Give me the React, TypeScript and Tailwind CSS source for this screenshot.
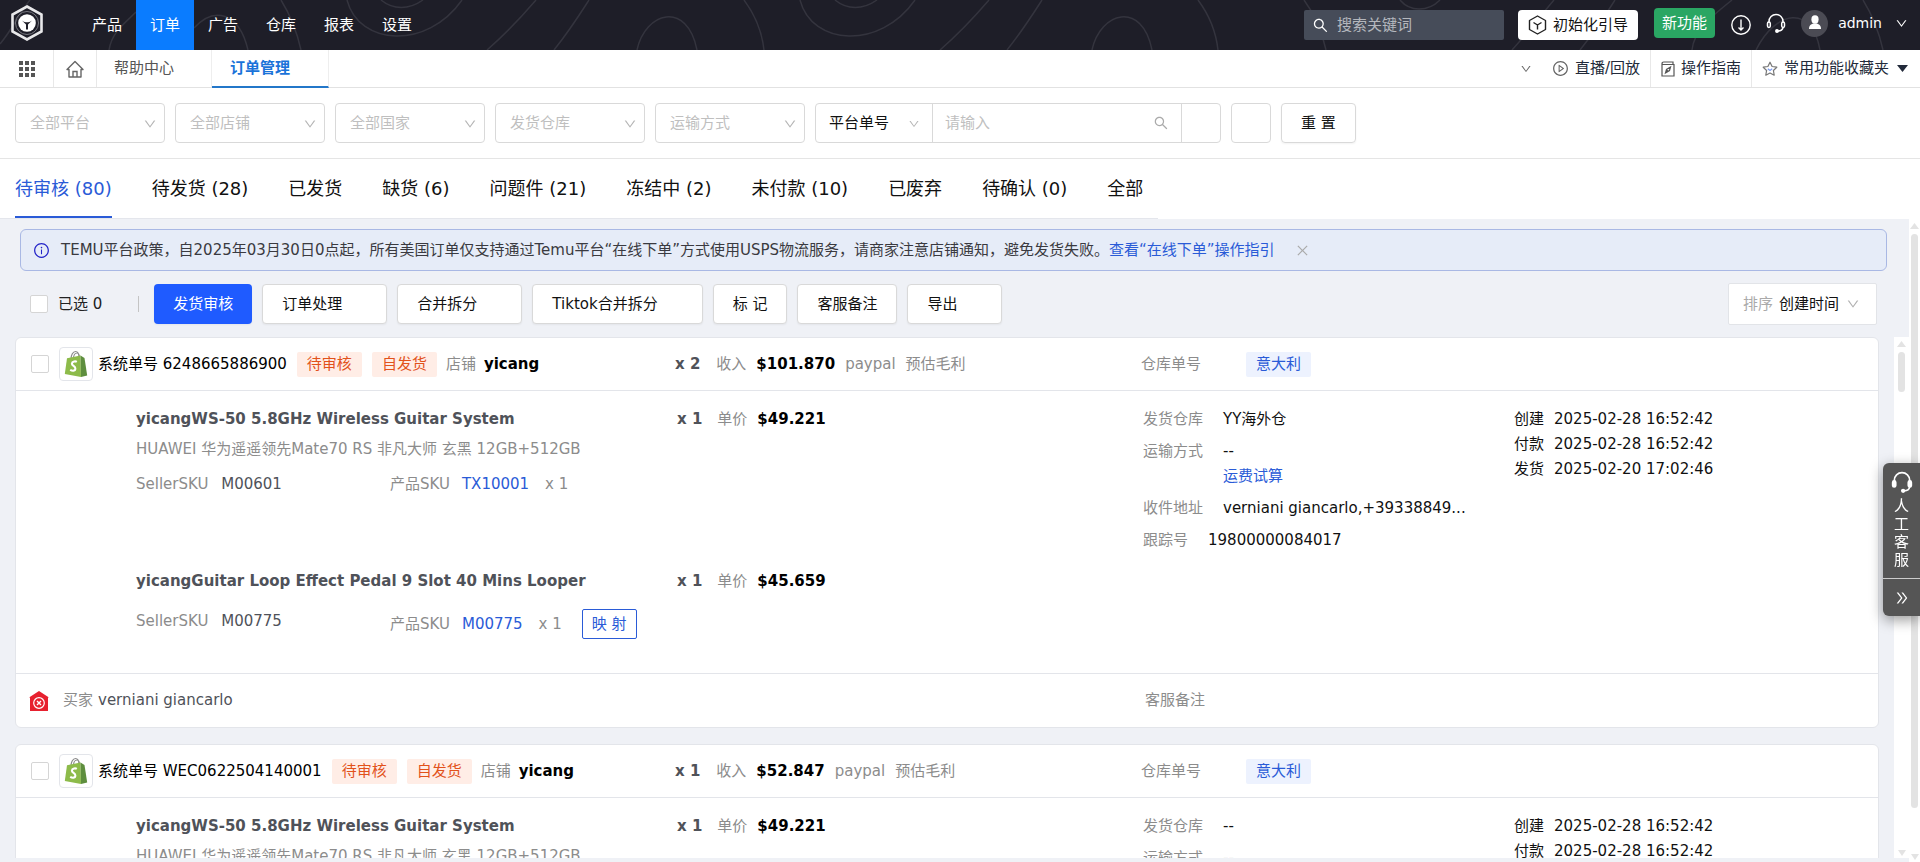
import type { ReactNode } from "react";
import { AiOutlineDown, AiOutlineSearch, AiOutlineClose, AiOutlineInfoCircle, AiOutlinePlayCircle, AiOutlineDoubleRight } from "react-icons/ai";

type Product = { name: string; desc?: string; sellerSku: string; sku: string; price: string; mapping?: boolean };
type Order = {
  no: string;
  qty: number;
  income: string;
  warehouse: string;
  address: string;
  tracking: string;
  buyer: string;
  dates: [string, string][];
  products: Product[];
};

const nav = ["产品", "订单", "广告", "仓库", "报表", "设置"];
const filters = ["全部平台", "全部店铺", "全部国家", "发货仓库", "运输方式"];
const statusTabs = ["待审核 (80)", "待发货 (28)", "已发货", "缺货 (6)", "问题件 (21)", "冻结中 (2)", "未付款 (10)", "已废弃", "待确认 (0)", "全部"];

const guitarSystem: Product = {
  name: "yicangWS-50 5.8GHz Wireless Guitar System",
  desc: "HUAWEI 华为遥遥领先Mate70 RS 非凡大师 玄黑 12GB+512GB",
  sellerSku: "M00601",
  sku: "TX10001",
  price: "$49.221",
};

const dates: [string, string][] = [
  ["创建", "2025-02-28 16:52:42"],
  ["付款", "2025-02-28 16:52:42"],
  ["发货", "2025-02-20 17:02:46"],
];

const orders: Order[] = [
  {
    no: "6248665886900",
    qty: 2,
    income: "$101.870",
    warehouse: "YY海外仓",
    address: "verniani giancarlo,+39338849...",
    tracking: "19800000084017",
    buyer: "verniani giancarlo",
    dates,
    products: [
      guitarSystem,
      { name: "yicangGuitar Loop Effect Pedal 9 Slot 40 Mins Looper", sellerSku: "M00775", sku: "M00775", price: "$45.659", mapping: true },
    ],
  },
  {
    no: "WEC0622504140001",
    qty: 1,
    income: "$52.847",
    warehouse: "--",
    address: "verniani giancarlo,+39338849...",
    tracking: "19800000084017",
    buyer: "verniani giancarlo",
    dates,
    products: [guitarSystem],
  },
];

function Logo() {
  return (
    <svg width="32" height="36" viewBox="0 0 32 36" fill="none">
      <path d="M16 1.500 30.500 9.500v17L16 34.500 1.500 26.500v-17z" stroke="#e8e8ea" strokeWidth="2.600" />
      <circle cx="16" cy="18" r="11.500" stroke="#77777f" strokeWidth="1" />
      <circle cx="16" cy="18" r="8.800" fill="#fff" />
      <path d="M11 15.500c2 1.500 3.500 1.700 5 1.700s3-.2 5-1.700l-4 4v5h-2v-5z" fill="#1e1e28" />
    </svg>
  );
}

function HeaderWaves() {
  return (
    <svg className="absolute inset-0 h-full w-full" viewBox="0 0 1920 50" preserveAspectRatio="xMidYMid slice" fill="none" stroke="#34343e" strokeWidth="1.500">
      <path d="M0 44C12 30 20 12 30 0" />
      <path d="M109 50C112 32 124 24 136 12M194 28c20-22 45-16 54 22" />
      <path d="M281 0c10 16 16 32 20 50" />
      <path d="M347 0c12 46 80 50 115 0M381 0c12 10 28 10 42 0" />
      <path d="M487 50C510 30 524 14 536 0M554 50C570 30 580 14 589 0" />
      <path d="M637 50c8-38 50-50 60 0M744 0c12 16 18 32 20 50" />
      <path d="M800 0c12 46 80 50 115 0M835 0c12 10 28 10 42 0" />
      <path d="M940 50C963 30 977 14 989 0M1007 50C1023 30 1033 14 1042 0" />
      <path d="M1092 50c8-38 50-50 60 0M1198 0c12 16 18 32 20 50" />
      <path d="M1304 0c12 16 18 32 22 50M1400 0c10 12 28 12 40 0" />
      <path d="M1512 50C1530 30 1542 14 1554 0M1580 50C1596 30 1606 14 1615 0" />
      <path d="M1692 50c2-20 20-34 40-50M1756 50c20-40 56-46 64 0M1863 0c10 16 16 32 20 50" />
    </svg>
  );
}

function GridIcon() {
  return (
    <svg width="18" height="18" viewBox="0 0 18 18" fill="#555">
      {[0, 6, 12].map((y) => [0, 6, 12].map((x) => <rect key={`${x}-${y}`} x={x + 1} y={y + 1} width="4" height="4" />))}
    </svg>
  );
}

function HomeIcon() {
  return (
    <svg width="18" height="18" viewBox="0 0 18 18" fill="none" stroke="#666" strokeWidth="1.400">
      <path d="M1 9.500 9 1.500l8 8h-2V17H3V9.500z" strokeLinejoin="round" />
      <path d="M7 17v-5.500h4V17" />
    </svg>
  );
}

function CubeIcon() {
  return (
    <svg width="19" height="20" viewBox="0 0 19 20" fill="none" stroke="#222" strokeWidth="1.400" strokeLinejoin="round">
      <path d="M9.500 1 17.500 5.500v9l-8 4.500-8-4.500v-9z" />
      <path d="M5.500 7.500 9.500 10l4-2.500M9.500 10v4.500" />
    </svg>
  );
}

function DownloadIcon() {
  return (
    <svg width="20" height="20" viewBox="0 0 20 20" fill="none" stroke="#fff" strokeWidth="1.400">
      <circle cx="10" cy="10" r="9.200" />
      <path d="M10 4.500v10M7.500 12.500l2.500 2.500 2.500-2.500" />
    </svg>
  );
}

function HeadsetIcon({ size = 20, bold = false }: { size?: number; bold?: boolean }) {
  return (
    <svg width={size} height={size} viewBox="0 0 20 20" fill={bold ? "#fff" : "none"} stroke="#fff" strokeWidth="1.500">
      <path d="M3 9.500V8.500a7 7 0 0 1 14 0v1" fill="none" />
      <rect x="1.500" y="9" width="2.800" height="5.500" rx="1.400" />
      <rect x="15.700" y="9" width="2.800" height="5.500" rx="1.400" />
      <path d="M17 14.500c-.5 2.500-2.500 3.500-5 3.500" fill="none" />
      <circle cx="11" cy="18" r="1.200" fill="#fff" />
    </svg>
  );
}

function UserIcon() {
  return (
    <svg width="14" height="16" viewBox="0 0 14 16" fill="#fff">
      <ellipse cx="7" cy="4.500" rx="3.600" ry="4.200" />
      <path d="M1 14c0-4 2.500-5.500 6-5.500s6 1.500 6 5.500z" />
    </svg>
  );
}

function GuideIcon() {
  return (
    <svg width="14" height="16" viewBox="0 0 14 16" fill="none" stroke="#555" strokeWidth="1.200">
      <path d="M1 15V3c0-1.300.6-2 1.800-2H12v2.500M1 3.500h12V15H1z" />
      <path d="m4.500 12 1-3.500 4-2.500-1 3.500zM7 9.200l-2.500 2.800" />
    </svg>
  );
}

function StarIcon() {
  return (
    <svg width="16" height="16" viewBox="0 0 16 16" fill="none" stroke="#777" strokeWidth="1.200" strokeLinejoin="round">
      <path d="m8 1.200 2.100 4.300 4.700.7-3.400 3.300.8 4.700L8 12l-4.200 2.200.8-4.700L1.200 6.200l4.700-.7z" />
      <path d="m5.800 7.800 2.200 1.700 2.200-1.700" stroke="#7c9cf0" />
    </svg>
  );
}

function ShopifyIcon() {
  return (
    <span className="flex size-[34px] shrink-0 items-center justify-center rounded border border-[#e3e5ea] bg-white">
      <svg width="24" height="28" viewBox="0 0 24 28">
        <path d="M7 9c0-4 2-7.500 4.500-7.500S15 4 15 8M9.500 8.500c0-3 1.500-5.500 3.500-5.500s2.500 2 2.500 5" fill="none" stroke="#8a8a8a" strokeWidth="1.200" />
        <path d="M3 8.200 16.500 5.500 17 27 0.800 24z" fill="#8dbb4a" />
        <path d="m16.500 5.500 4 2.500L23.200 25.500 17 27z" fill="#5e8e3e" />
        <path d="M12.800 11.800c-1-.6-4.700-.8-4.900 1.800-.2 2.300 3.700 2.500 3.500 5.200-.2 2.200-3 2.400-5.200 1" fill="none" stroke="#fff" strokeWidth="2.100" />
      </svg>
    </span>
  );
}

function BuyerIcon() {
  return (
    <svg width="20" height="20" viewBox="0 0 20 20" fill="none">
      <path d="M10 0 20 6.500h-1V20H1V6.500H0z" fill="#e7212f" />
      <circle cx="10" cy="12" r="5.300" stroke="#fff" strokeWidth="1.200" />
      <path d="m8 10 4 4m0-4-4 4" stroke="#fff" strokeWidth="1.400" />
    </svg>
  );
}

function Header() {
  return (
    <header className="relative h-[50px] shrink-0 bg-[#1e1e28] text-white">
      <HeaderWaves />
      <div className="relative flex h-full items-center">
        <a href="#" aria-label="首页" className="-mt-1 mr-[35px] ml-[11px]">
          <Logo />
        </a>
        <nav className="flex h-full">
          {nav.map((item) => (
            <a key={item} href="#" className={`flex w-[58px] items-center justify-center ${item === "订单" ? "bg-[#0a7cff]" : ""}`}>
              {item}
            </a>
          ))}
        </nav>
        <label className="ml-auto flex h-[30px] w-[200px] items-center gap-2 rounded-xs bg-[#464c59] px-2">
          <AiOutlineSearch size={17} className="shrink-0" />
          <input aria-label="搜索关键词" placeholder="搜索关键词" className="w-full bg-transparent outline-none placeholder:text-[#b4b7bd]" />
        </label>
        <button className="ml-[14px] flex h-[30px] items-center gap-1.5 rounded bg-white px-2.5 text-[#111]">
          <CubeIcon />
          初始化引导
        </button>
        <button className="-mt-1 ml-4 h-[30px] rounded bg-[#2aa663] px-2">新功能</button>
        <button aria-label="下载" className="ml-4">
          <DownloadIcon />
        </button>
        <button aria-label="客服" className="-mt-1 ml-[15px]">
          <HeadsetIcon />
        </button>
        <button className="-mt-1 mr-3 ml-[15px] flex items-center text-[14px]">
          <span className="mr-2.5 flex size-[27px] items-center justify-center rounded-full bg-[#4b4b54]">
            <UserIcon />
          </span>
          admin
          <AiOutlineDown size={13} className="ml-[13px]" />
        </button>
      </div>
    </header>
  );
}

function PageTabs() {
  return (
    <div className="flex h-[38px] shrink-0 items-stretch border-b border-[#e2e2e2] text-[#555]">
      <button aria-label="菜单" className="flex w-[54px] items-center justify-center border-r border-[#e8e8e8]">
        <GridIcon />
      </button>
      <button aria-label="主页" className="flex w-[43px] items-center justify-center border-r border-[#e8e8e8]">
        <HomeIcon />
      </button>
      <a href="#" className="flex w-[115px] items-center border-r border-[#eee] pl-[17px]">
        帮助中心
      </a>
      <a href="#" className="-mb-px flex w-[117px] items-center border-r border-b-2 border-r-[#eee] border-b-[#2377c9] pl-[18px] font-bold text-[#1a73d9]">
        订单管理
      </a>
      <div className="ml-auto flex text-[#222a3a]">
        <button aria-label="更多" className="mr-5">
          <AiOutlineDown size={12} className="text-[#666]" />
        </button>
        <a href="#" className="flex items-center gap-1.5 border-r border-[#e8e8e8] pr-2.5">
          <AiOutlinePlayCircle size={17} className="text-[#666]" />
          直播/回放
        </a>
        <a href="#" className="flex items-center gap-1.5 border-r border-[#e8e8e8] px-2.5">
          <GuideIcon />
          操作指南
        </a>
        <a href="#" className="flex items-center gap-1.5 pr-3 pl-2.5">
          <StarIcon />
          常用功能收藏夹
          <svg width="11" height="7" viewBox="0 0 11 7" fill="#222a3a" className="ml-0.5">
            <path d="M0 0h11L5.500 7z" />
          </svg>
        </a>
      </div>
    </div>
  );
}

function FilterBar() {
  return (
    <div className="flex h-[71px] shrink-0 items-center gap-2.5 border-b border-[#e5e5e5] px-[15px]">
      {filters.map((f) => (
        <div key={f} className="relative w-[150px]">
          <select aria-label={f} className="h-10 w-full appearance-none rounded border border-[#d9d9d9] bg-white px-3.5 text-[#bfbfbf]">
            <option>{f}</option>
          </select>
          <AiOutlineDown size={14} className="pointer-events-none absolute top-3.5 right-2 text-[#b5b5b5]" />
        </div>
      ))}
      <div className="flex h-10 rounded border border-[#d9d9d9]">
        <div className="relative w-[117px] border-r border-[#d9d9d9]">
          <select aria-label="单号类型" className="h-full w-full appearance-none bg-transparent px-[13px] text-[#111]">
            <option>平台单号</option>
          </select>
          <AiOutlineDown size={12} className="pointer-events-none absolute top-3.5 right-3 text-[#b5b5b5]" />
        </div>
        <label className="flex w-[249px] items-center border-r border-[#d9d9d9] px-3">
          <input aria-label="单号" placeholder="请输入" className="w-full outline-none placeholder:text-[#bfbfbf]" />
          <AiOutlineSearch size={16} className="shrink-0 text-[#aaa]" />
        </label>
        <button aria-label="批量搜索" className="w-[38px]" />
      </div>
      <button aria-label="高级搜索" className="h-10 w-10 rounded border border-[#d9d9d9]" />
      <button className="h-10 rounded border border-[#d9d9d9] px-[19px] text-[#111] shadow-xs">重 置</button>
    </div>
  );
}

function StatusTabs() {
  return (
    <div className="h-[60px] shrink-0 bg-white">
      <div className="flex h-full w-fit gap-10 border-b border-[#e4e6ec] px-[15px] text-[18px]">
        {statusTabs.map((tab, i) => (
          <button key={tab} className={`flex items-center ${i === 0 ? "border-b-2 border-[#2a5bd7] pt-0.5 text-[#2a5bd7]" : "text-[#111]"}`}>
            {tab}
          </button>
        ))}
      </div>
    </div>
  );
}

function ToolButton({ children, menu = false }: { children: ReactNode; menu?: boolean }) {
  return (
    <button className={`h-10 rounded border border-[#d9d9d9] bg-white pl-[19px] text-[#111] shadow-xs ${menu ? "pr-[44px]" : "pr-[19px]"}`}>
      {children}
    </button>
  );
}

function Notice() {
  return (
    <div className="mx-5 mt-2.5 flex h-[42px] items-center rounded-md border border-[#a9b8e4] bg-[#e6ecf8] px-3 text-[#3a3a40]">
      <AiOutlineInfoCircle size={17} className="mr-[11px] shrink-0 text-[#2424c8]" />
      <p>
        TEMU平台政策，自2025年03月30日0点起，所有美国订单仅支持通过Temu平台“在线下单”方式使用USPS物流服务，请商家注意店铺通知，避免发货失败。
        <a href="#" className="text-[#2a5bd7]">查看“在线下单”操作指引</a>
      </p>
      <button aria-label="关闭" className="ml-5 text-[#aaa]">
        <AiOutlineClose size={15} />
      </button>
    </div>
  );
}

function Toolbar() {
  return (
    <div className="mt-3 flex h-[42px] items-center gap-2.5 pr-[30px] pl-[30px]">
      <label className="flex items-center gap-2.5 text-[#222]">
        <input type="checkbox" className="size-[18px] appearance-none rounded-xs border border-[#d5d5d5] bg-white" />
        已选 0
      </label>
      <span className="mr-[5px] ml-[26px] h-4 w-px bg-[#c4c4c4]" />
      <button className="h-10 rounded bg-[#1f5bff] px-[19px] text-white shadow-xs">发货审核</button>
      <ToolButton menu>订单处理</ToolButton>
      <ToolButton menu>合并拆分</ToolButton>
      <ToolButton menu>Tiktok合并拆分</ToolButton>
      <ToolButton>标 记</ToolButton>
      <ToolButton>客服备注</ToolButton>
      <ToolButton menu>导出</ToolButton>
      <label className="relative ml-auto flex h-[42px] w-[149px] items-center rounded-xs border border-[#e2e4e8] bg-white pl-3.5 text-[#aaa]">
        <span className="shrink-0">排序</span>
        <select className="h-full w-full appearance-none bg-transparent pl-1.5 text-[#111]">
          <option>创建时间</option>
        </select>
        <AiOutlineDown size={14} className="pointer-events-none absolute right-4 text-[#b0b0b0]" />
      </label>
    </div>
  );
}

function Tag({ children }: { children: ReactNode }) {
  return <span className="h-[25px] rounded-xs bg-[#ffede6] px-2.5 leading-[25px] text-[#e2521b]">{children}</span>;
}

const columns = "grid grid-cols-[659fr_466fr_371fr_366fr]";

function ProductRow({ product }: { product: Product }) {
  return (
    <div className="grid min-h-26 grid-cols-[659fr_466fr] content-start">
      <div className="pl-[120px]">
        <div className="font-bold text-[#4f5259]">{product.name}</div>
        {product.desc && <div className="mt-[5px] text-[#8c8c8c]">{product.desc}</div>}
        <div className={`flex h-[30px] text-[#8c8c8c] ${product.mapping ? "mt-[15px]" : "mt-[10px]"}`}>
          <div className="w-[254px]">
            SellerSKU <span className="ml-2 text-[#4f5259]">{product.sellerSku}</span>
          </div>
          <div className={product.mapping ? "flex items-center" : "flex items-start"}>
            产品SKU
            <a href="#" className="ml-3 text-[#2a5bd7]">{product.sku}</a>
            <span className="ml-4">x 1</span>
            {product.mapping && <button className="ml-5 h-[30px] rounded-xs border border-[#2a5bd7] px-[9px] text-[#2a5bd7]">映 射</button>}
          </div>
        </div>
      </div>
      <div className="pl-0.5">
        <b className="text-[#4f5259]">x 1</b>
        <span className="mr-[10px] ml-[15px] text-[#8c8c8c]">单价</span>
        <b className="text-black">{product.price}</b>
      </div>
    </div>
  );
}

function OrderCard({ order }: { order: Order }) {
  return (
    <article className="shrink-0 rounded-md border border-[#e3e5ea] bg-white">
      <div className={`${columns} h-[53px] items-center border-b border-[#e3e5ea]`}>
        <div className="flex items-center pl-[15px]">
          <input type="checkbox" aria-label={order.no} className="mr-2.5 size-[18px] appearance-none rounded-xs border border-[#d5d5d5]" />
          <ShopifyIcon />
          <span className="ml-[5px] text-black">系统单号 {order.no}</span>
          <span className="ml-2.5 flex gap-2.5">
            <Tag>待审核</Tag>
            <Tag>自发货</Tag>
          </span>
          <span className="mr-2 ml-[9px] text-[#8c8c8c]">店铺</span>
          <b className="text-black">yicang</b>
        </div>
        <div className="text-[#8c8c8c]">
          <b className="text-[#4f5259]">x {order.qty}</b>
          <span className="mr-[10px] ml-4">收入</span>
          <b className="text-black">{order.income}</b>
          <span className="mx-[10px]">paypal</span>
          预估毛利
        </div>
        <div className="flex items-center gap-[45px] text-[#8c8c8c]">
          仓库单号
          <span className="h-[25px] rounded-xs bg-[#edf2fe] px-2.5 leading-[25px] text-[#2a5bd7]">意大利</span>
        </div>
      </div>
      <div className="grid grid-cols-[1125fr_371fr_366fr] pt-4">
        <div className="flex flex-col gap-[58px]">
          {order.products.map((p) => (
            <ProductRow key={p.name} product={p} />
          ))}
        </div>
        <dl className="flex flex-col gap-[7px] pl-0.5 text-[#111] [&_dt]:text-[#8c8c8c] [&>div]:flex [&>div]:gap-5">
          <div>
            <dt>发货仓库</dt>
            <dd>{order.warehouse}</dd>
          </div>
          <div>
            <dt>运输方式</dt>
            <dd>
              --
              <a href="#" className="block text-[#2a5bd7]">运费试算</a>
            </dd>
          </div>
          <div>
            <dt>收件地址</dt>
            <dd>{order.address}</dd>
          </div>
          <div>
            <dt>跟踪号</dt>
            <dd>{order.tracking}</dd>
          </div>
        </dl>
        <dl className="pl-0.5 text-[#111]">
          {order.dates.map(([label, value]) => (
            <div key={label} className="flex gap-2.5">
              <dt>{label}</dt>
              <dd>{value}</dd>
            </div>
          ))}
        </dl>
      </div>
      <div className={`${columns} h-[54px] items-center border-t border-[#e3e5ea] text-[#8c8c8c]`}>
        <div className="col-span-2 flex items-center pl-[13px]">
          <BuyerIcon />
          <span className="mr-[5px] ml-3.5">买家</span>
          <span className="text-[#4f5259]">{order.buyer}</span>
        </div>
        <div className="pl-1">客服备注</div>
      </div>
    </article>
  );
}

// Slim always-visible scrollbar with arrow heads at both ends
function ScrollRail({ thumb }: { thumb: string }) {
  return (
    <div className="flex w-full flex-1 flex-col items-center justify-between bg-white pt-1 pb-0.5">
      <div className="flex w-full flex-1 flex-col items-center gap-[5px]">
        <svg width="9" height="6" viewBox="0 0 9 6" fill="#e3e3e3">
          <path d="M4.500 0 9 6H0z" />
        </svg>
        <div className={`w-[7px] rounded-full bg-[#e3e3e3] ${thumb}`} />
      </div>
      <svg width="8" height="6" viewBox="0 0 8 6" fill="#e3e3e3" className="shrink-0">
        <path d="M0 0h8L4 6z" />
      </svg>
    </div>
  );
}

function ServiceDock() {
  return (
    <aside className="fixed top-[463px] right-0 w-[37px] rounded-l-md bg-[#555] text-white shadow-[0_4px_14px_rgba(0,0,0,0.4)]">
      <button className="flex h-[115px] w-full flex-col items-center pt-2 leading-[18px]">
        <HeadsetIcon size={22} bold />
        <span className="mt-1 w-4">人工客服</span>
      </button>
      <button aria-label="收起" className="flex h-[38px] w-full items-center justify-center border-t border-[#ccc]">
        <AiOutlineDoubleRight size={16} />
      </button>
    </aside>
  );
}

export default function App() {
  return (
    <div className="flex h-screen flex-col overflow-hidden bg-white font-['DejaVu_Sans','Noto_Sans_CJK_SC',sans-serif] text-[15px] leading-[25px]">
      <Header />
      <PageTabs />
      <FilterBar />
      <StatusTabs />
      <main className="flex min-h-0 flex-1">
        <div className="flex min-w-0 flex-1 flex-col bg-[#eff1f6] pb-1">
          <div className="pr-0.5">
            <Notice />
            <Toolbar />
          </div>
          <div className="mt-3 flex min-h-0 flex-1">
            <div className="flex min-w-0 flex-1 flex-col gap-4 overflow-hidden px-[15px]">
              {orders.map((o) => (
                <OrderCard key={o.no} order={o} />
              ))}
            </div>
            <div className="flex w-[15px]">
              <ScrollRail thumb="h-10" />
            </div>
          </div>
        </div>
        <div className="flex w-[11px]">
          <ScrollRail thumb="h-[91%]" />
        </div>
      </main>
      <ServiceDock />
    </div>
  );
}
